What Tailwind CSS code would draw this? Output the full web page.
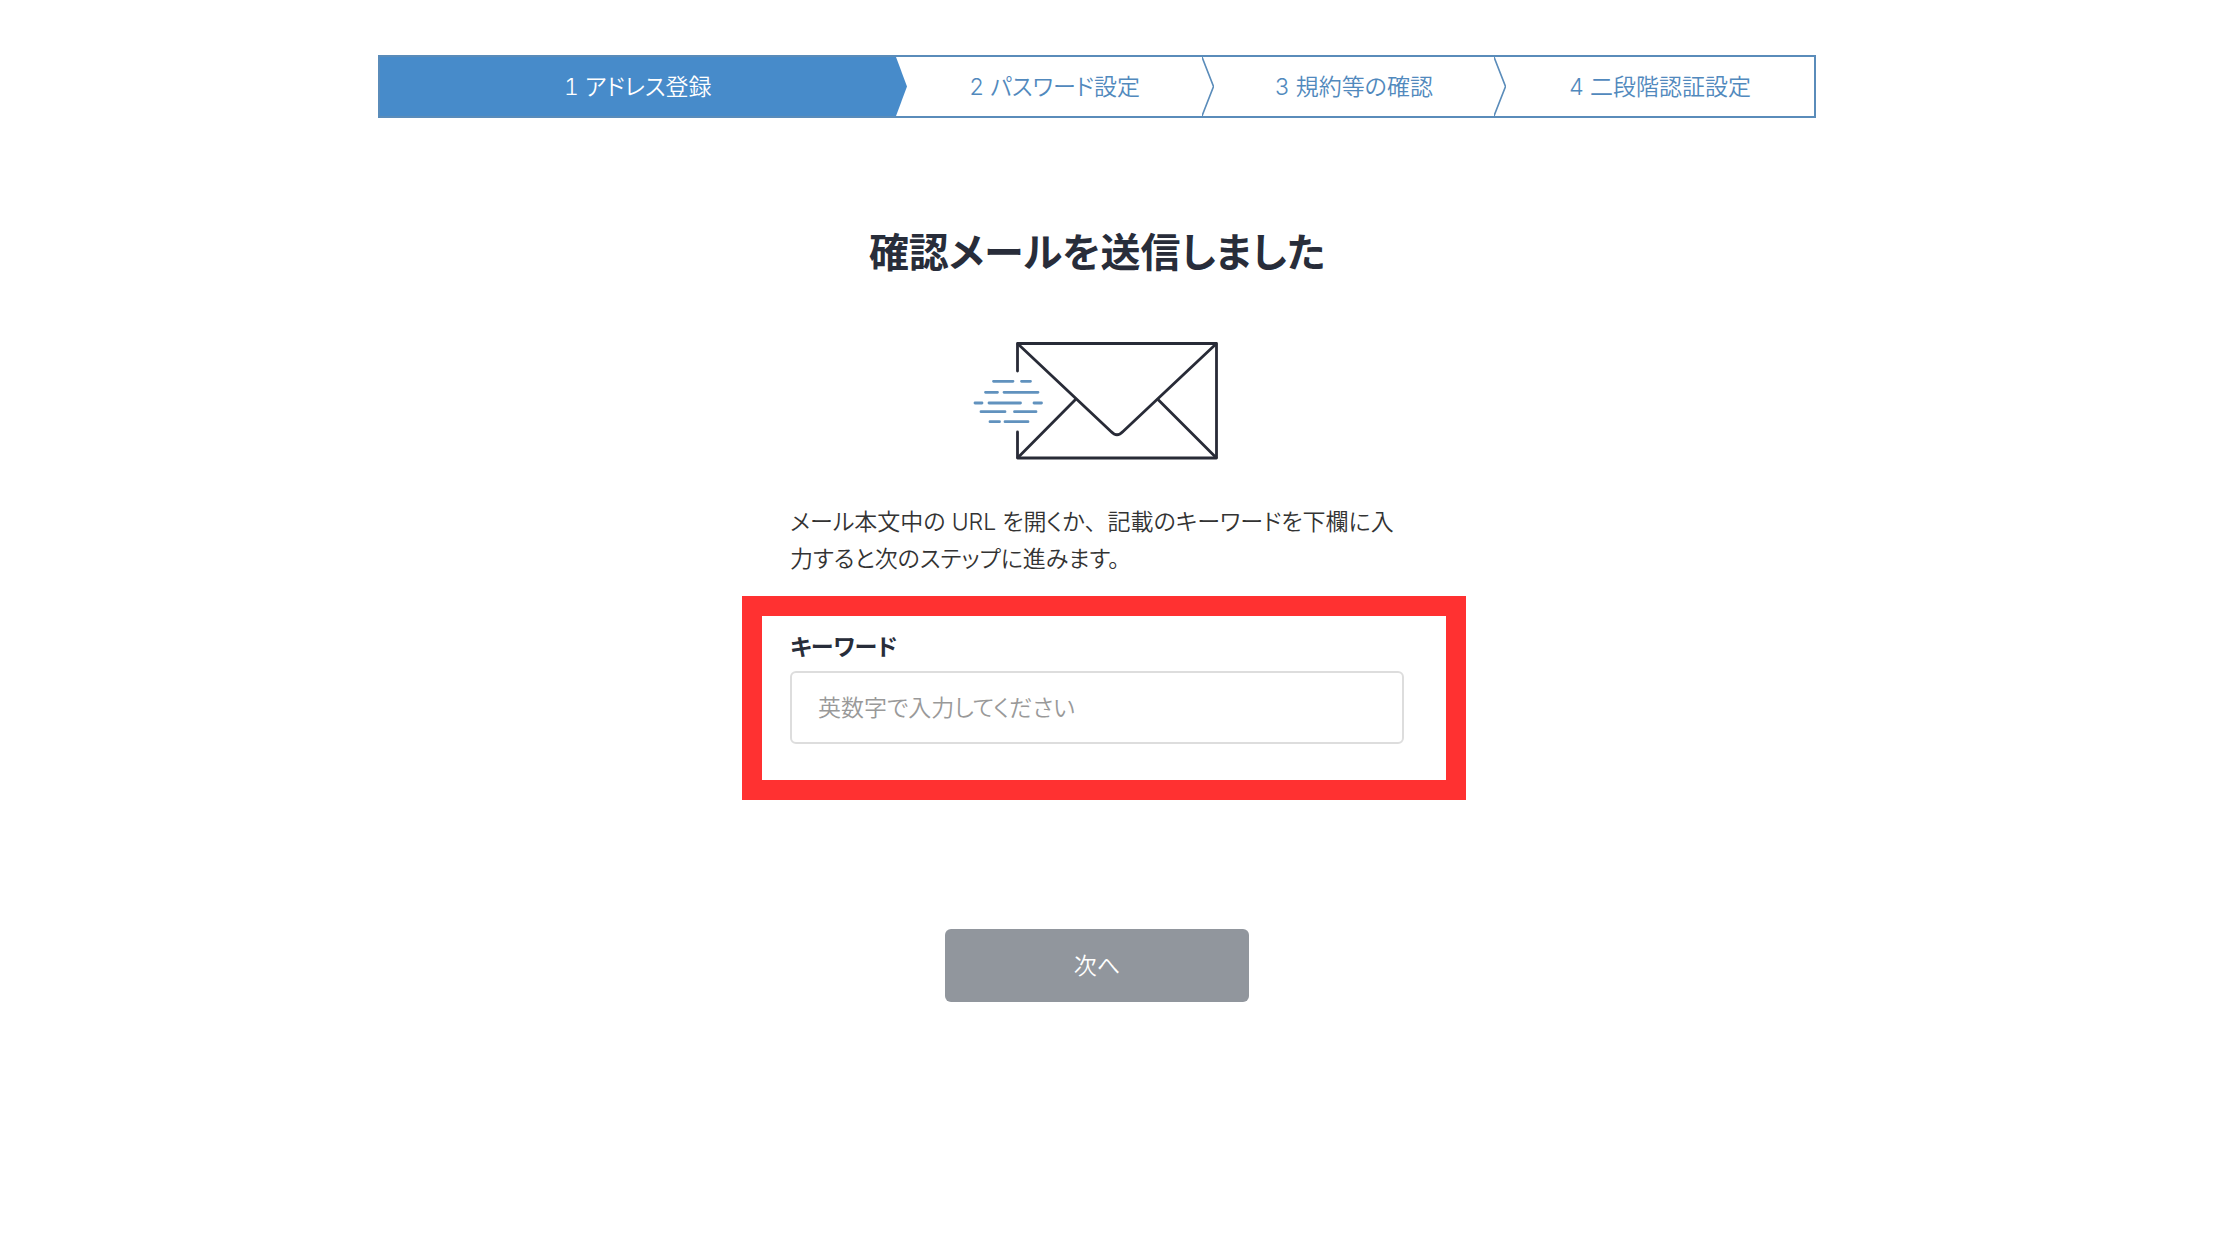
<!DOCTYPE html>
<html lang="ja">
<head>
  <meta charset="UTF-8" />
  <meta name="viewport" content="width=device-width, initial-scale=1.0" />
  <title>確認メールを送信しました</title>
  <script src="https://cdn.jsdelivr.net/npm/@tailwindcss/browser@4"></script>
</head>
<body class="bg-white pr-[46px] font-[Inter,'Noto_Sans_CJK_JP',sans-serif] text-[23px] font-[350] text-[#333333] [font-feature-settings:'palt','tnum']">
  <main class="mx-auto max-w-[1438px] pt-[55px]">
    <!-- ステップ -->
    <ol class="flex h-[63px] border-2 border-[#5a8cba] text-center leading-[61px] text-[#5189bd]">
      <li class="grow-[517] basis-0 bg-[#478bca] text-white">1 アドレス登録</li>
      <li aria-hidden="true" class="w-3">
        <svg class="block h-full w-full" viewBox="0 0 12 59" preserveAspectRatio="none"><path d="M0 0L11 29.5L0 59Z" fill="#478bca" /></svg>
      </li>
      <li class="grow-[295] basis-0">2 パスワード設定</li>
      <li aria-hidden="true" class="w-3">
        <svg class="block h-full w-full" viewBox="0 0 12 59" fill="none" stroke="#5a8cba" stroke-width="1.6"><path d="M0 0L11.5 29.5L0 59" /></svg>
      </li>
      <li class="grow-[281] basis-0">3 規約等の確認</li>
      <li aria-hidden="true" class="w-3">
        <svg class="block h-full w-full" viewBox="0 0 12 59" fill="none" stroke="#5a8cba" stroke-width="1.6"><path d="M0 0L11.5 29.5L0 59" /></svg>
      </li>
      <li class="grow-[309] basis-0">4 二段階認証設定</li>
    </ol>

    <form class="mx-auto mt-[105px] max-w-[614px]">
      <h1 class="text-center text-[40px] leading-[60px] font-bold text-[#282d3a]">確認メールを送信しました</h1>

      <svg class="mx-auto mt-[37px] block h-[160px] w-[280px]" viewBox="-3 0 280 160" fill="none" stroke-linecap="round" stroke-linejoin="round">
        <g stroke="#282b37" stroke-width="2.8">
          <path d="M57.5 51V23.5H256.5V138H57.5V112" />
          <path d="M58 24L151 111.5Q157 118 163 111.5L256 24" />
          <path d="M58 137.5L115.5 79.5M256 137.5L198 79.5" />
        </g>
        <g stroke="#6192be" stroke-width="2.8">
          <path d="M33.5 61.3H53M61.5 61.3H70.5" />
          <path d="M25.5 72.3H37.5M44 72.3H78" />
          <path d="M15 83H22M29 83H60.5M74 83H81.5" />
          <path d="M21 91.7H45M54.5 91.7H76" />
          <path d="M30 101.7H39.5M45 101.7H68" />
        </g>
      </svg>

      <p class="mt-6 leading-[37px]">メール本文中の URL を開くか<span class="[font-feature-settings:normal]">、</span>記載のキーワードを下欄に入<br />力すると次のステップに進みます。</p>

      <div class="mt-[18px] -mr-[62px] -ml-12 border-20 border-[#ff3131] pt-4 pr-[42px] pb-9 pl-7">
        <label for="keyword" class="block leading-[30px] font-bold text-[#282d3a]">キーワード</label>
        <input id="keyword" type="text" placeholder="英数字で入力してください" class="mt-[9px] block h-[73px] w-full rounded-md border-2 border-[#dddddd] px-[26px] placeholder:text-[#999999]" />
      </div>

      <button type="submit" class="mx-auto mt-[129px] block h-[73px] w-[304px] rounded-md bg-[#91969d] pt-0.5 text-white">次へ</button>
    </form>
  </main>
</body>
</html>
